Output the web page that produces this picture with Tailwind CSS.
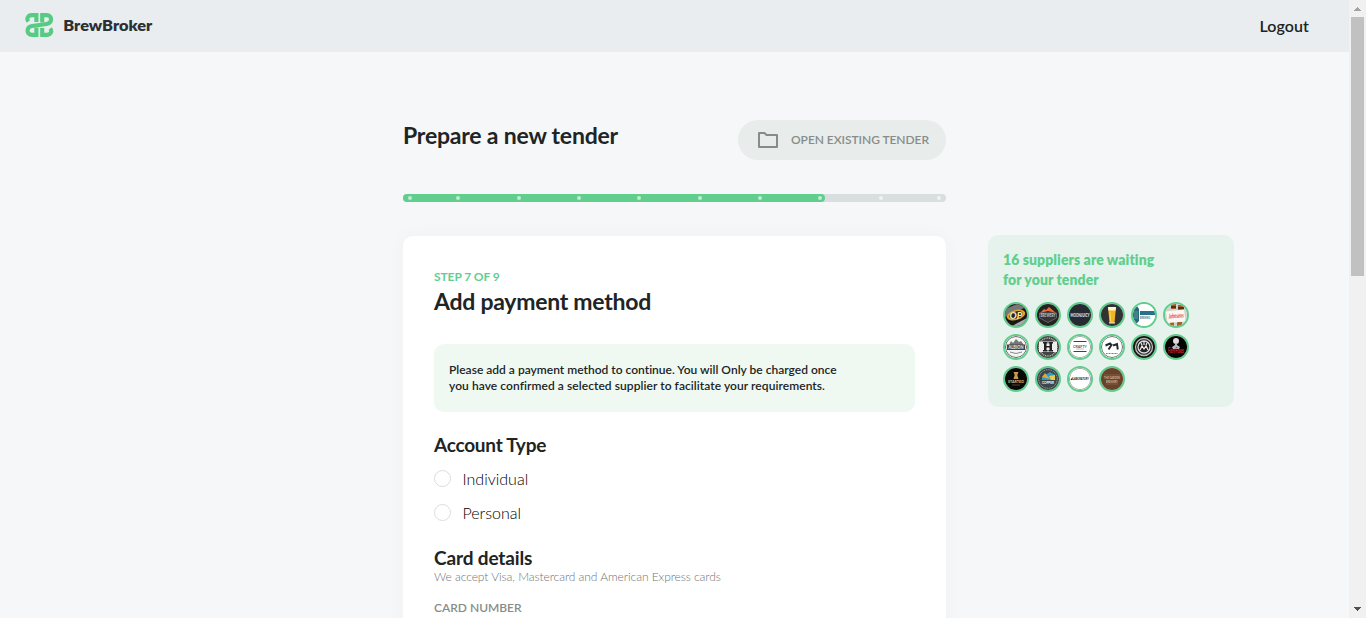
<!DOCTYPE html>
<html lang="en">
<head>
<meta charset="utf-8">
<title>BrewBroker</title>
<script src="https://cdn.jsdelivr.net/npm/@tailwindcss/browser@4"></script>
</head>
<body class="flex h-[618px] w-[1366px] overflow-hidden bg-[#f6f7f9] font-['Lato',sans-serif] text-[#202424]">
<div class="h-[618px] w-[1349px] shrink-0 overflow-hidden">
  <header class="flex h-[52px] items-start justify-between bg-[#e9edf0] pl-[25px] pr-10">
    <div class="flex items-start pt-[13px]">
      <svg class="h-6 w-[29px]" viewBox="0 0 29 24" fill="none" stroke="#56cb82" stroke-width="4.100">
        <path d="M11.400 9V2.100H7C2.700 2.100 1.200 5.800 3.400 8.600"/>
        <path d="M11.400 14.800V21.900H7C1 21.900 1 13.700 7 13L21.600 11C27.600 10.300 27.600 2.100 21.600 2.100H17.200V9.200"/>
        <path d="M17.200 15V21.900H21.600C25.900 21.900 27.400 18.200 25.200 15.400"/>
      </svg>
      <svg class="h-6 w-[100px]" viewBox="0 0 100 24"><text x="9.300" y="17.700" textLength="89" lengthAdjust="spacingAndGlyphs" font-family="Lato" font-weight="800" font-size="15.500" fill="#2b3033">BrewBroker</text></svg>
    </div>
    <div class="pt-[14px] text-[16px] leading-6 font-semibold tracking-[0.08px]">Logout</div>
  </header>
  <div class="flex items-start pl-[403px]">
    <main class="w-[543px] pt-[68px]">
      <div class="flex h-10 items-start justify-between">
        <h1 class="text-[23px] leading-[30px] font-bold tracking-[-0.2px]">Prepare a new tender</h1>
        <div class="flex h-10 w-[208px] items-center rounded-full bg-[#e8edeb] pl-5">
          <svg class="h-4 w-5" viewBox="0 0 20 16" fill="none" stroke="#868c8a" stroke-width="2" stroke-linejoin="round"><path d="M1 1h5.500l2 2H19v12H1z"/></svg>
          <span class="ml-[13px] text-[12px] font-semibold tracking-[-0.05px] whitespace-nowrap text-[#868c8a]">OPEN EXISTING TENDER</span>
        </div>
      </div>
      <svg class="mt-[34px] block h-2 w-[543px]" viewBox="0 0 543 8">
        <rect width="543" height="8" rx="4" fill="#d9dee0"/><rect width="422" height="8" rx="4" fill="#62ce8e"/>
        <g fill="#fff" fill-opacity=".6"><circle cx="7" cy="4" r="2"/><circle cx="55" cy="4" r="2"/><circle cx="116" cy="4" r="2"/><circle cx="176" cy="4" r="2"/><circle cx="236" cy="4" r="2"/><circle cx="297" cy="4" r="2"/><circle cx="357" cy="4" r="2"/><circle cx="417" cy="4" r="2"/><circle cx="478" cy="4" r="2"/><circle cx="536" cy="4" r="2"/></g>
      </svg>
      <section class="mt-[34px] h-[420px] rounded-t-[10px] bg-white px-[31px] pt-8 shadow-[0_0_20px_rgba(0,0,0,0.03)]">
        <div class="text-[12px] leading-[18px] font-bold tracking-[-0.1px] text-[#62ce8e]">STEP 7 OF 9</div>
        <h2 class="-mt-px text-[23px] leading-8 font-bold tracking-[-0.26px]">Add payment method</h2>
        <div class="mt-[27px] h-[68px] rounded-[10px] bg-[#eff9f2] pt-[18px] pl-[15px] text-[12px] leading-4 font-semibold">
          <p class="tracking-[0.01px] whitespace-nowrap">Please add a payment method to continue. You will Only be charged once</p>
          <p class="tracking-[0.065px] whitespace-nowrap">you have confirmed a selected supplier to facilitate your requirements.</p>
        </div>
        <h3 class="mt-[21px] text-[19px] leading-6 font-bold tracking-[-0.24px]">Account Type</h3>
        <div class="mt-3 flex h-[18px] items-start"><span class="mt-px size-[17px] rounded-full border border-[#d9dee0]"></span><span class="ml-[11.500px] text-[16px] leading-[20px] font-light text-black">Individual</span></div>
        <div class="mt-4 flex h-[18px] items-start"><span class="mt-px size-[17px] rounded-full border border-[#d9dee0]"></span><span class="ml-[11.500px] text-[16px] leading-[20px] font-light text-black">Personal</span></div>
        <h3 class="mt-[25px] text-[19px] leading-6 font-bold tracking-[-0.13px]">Card details</h3>
        <p class="text-[12px] leading-[14px] font-light tracking-[-0.06px] text-[#6f7477]">We accept Visa, Mastercard and American Express cards</p>
        <p class="mt-4 text-[12px] leading-4 font-semibold text-[#868c8a]">CARD NUMBER</p>
      </section>
    </main>
    <aside class="mt-[183px] ml-[42px] h-[172px] w-[246px] rounded-[10px] bg-[#e6f3ec] pt-[15px] pl-[15px]">
      <p class="text-[14px] leading-5 font-extrabold tracking-[0.08px] text-[#62ce8e]">16 suppliers are waiting<br>for your tender</p>
      <div class="mt-3 grid w-[186px] grid-cols-6 gap-1.5 *:size-[26px] *:overflow-hidden *:rounded-full *:border-2 *:border-[#5fce8c]">
        <svg viewBox="0 0 22 22"><rect width="22" height="22" fill="#171717"/><path d="M0 5L12 0l9 3-8 4L0 13z" fill="#777"/><path d="M7 22l15-8v8z" fill="#aaa"/><ellipse cx="11" cy="11" rx="9.500" ry="5" fill="#dba52e" transform="rotate(-16 11 11)"/><ellipse cx="11" cy="11" rx="7" ry="3.500" fill="#222" transform="rotate(-16 11 11)"/><text x="4.500" y="14.500" font-family="Lato" font-weight="900" font-style="italic" font-size="9.500" fill="#f7e6b0">OP</text></svg>
        <svg viewBox="0 0 22 22"><rect width="22" height="22" fill="#252322"/><path d="M3 9l4-4 2 1 3-3 7 6-4-1-4-1-4 1z" fill="#e66d3a"/><path d="M2.500 9h17v5L11 18.500 2.500 14z" fill="#343434" stroke="#888" stroke-width=".6"/><text x="3.500" y="13.300" textLength="15" lengthAdjust="spacingAndGlyphs" font-family="Lato" font-weight="700" font-size="5" fill="#ccc">BREWERY</text></svg>
        <svg viewBox="0 0 22 22"><rect width="22" height="22" fill="#262a31"/><text x="1.500" y="13" textLength="19" lengthAdjust="spacingAndGlyphs" font-family="Lato" font-weight="900" font-size="6" fill="#eee">MOONJUICY</text></svg>
        <svg viewBox="0 0 22 22"><rect width="22" height="22" fill="#303236"/><path d="M7 3h8l-1.500 16h-5z" fill="#f0b51f"/><path d="M7 3h8l-.4 3.500H7.400z" fill="#fff5d5"/><path d="M9 8l.8 10" stroke="#ffd95a"/><path d="M8 19h6" stroke="#eee"/></svg>
        <svg viewBox="0 0 22 22"><rect width="22" height="22" fill="#fff"/><path d="M0 3l4-1 2 3v12l-3 3H0z" fill="#286879"/><path d="M2 7v8M4 7v8" stroke="#8db8c1" stroke-width=".6"/><rect x="7" y="7" width="15" height="4" fill="#277287"/><text x="7" y="14.500" textLength="10" lengthAdjust="spacingAndGlyphs" font-family="Lato" font-weight="700" font-size="3.500" fill="#277287">BREWING</text></svg>
        <svg viewBox="0 0 22 22"><rect width="22" height="22" fill="#d4d0cb"/><path d="M6 0h5v5H6zM13 1h6v5h-6zM5 18h4v4H5zM12 18h5v4h-5z" fill="#a95d27"/><path d="M6 3h5M13 4h6" stroke="#382015" stroke-width="1.500"/><path d="M1 7.500l18-2 1.500 12-18 1.500z" fill="#faf6f4"/><text x="3.500" y="14" textLength="15" lengthAdjust="spacingAndGlyphs" transform="rotate(-4 11 11)" font-family="Lato" font-weight="900" font-style="italic" font-size="6.500" fill="#e25255">Johnsons</text></svg>
        <svg viewBox="0 0 22 22"><rect width="22" height="22" fill="#f5f5f5"/><circle cx="11" cy="11" r="10.500" fill="none" stroke="#666"/><path d="M4 9l2-4 2 2 3-4 3 3 2-1 3 4z" fill="#777"/><rect x="2" y="8.500" width="18" height="5.500" fill="#444"/><text x="3.500" y="13.200" textLength="15" lengthAdjust="spacingAndGlyphs" font-family="Lato" font-weight="800" font-size="5.500" fill="#ddd">ALBION</text><path d="M5 16q6 3 12 0" stroke="#888" fill="none"/></svg>
        <svg viewBox="0 0 22 22"><rect width="22" height="22" fill="#444"/><circle cx="11" cy="11" r="9" fill="none" stroke="#bbb" stroke-width="1.500" stroke-dasharray="1 .8"/><rect x="2" y="5.500" width="18" height="10.500" fill="#eee"/><path d="M6 6h4.500v1.500h-1V10h3V7.500h-1V6H16v1.500h-1v6.500h1v1.500h-4.500V14h1v-2.500h-3V14h1v1.500H6V14h1V7.500H6z" fill="#222"/></svg>
        <svg viewBox="0 0 22 22"><rect width="22" height="22" fill="#fff"/><circle cx="11" cy="11" r="10.700" fill="none" stroke="#777" stroke-width=".7"/><path d="M4.500 5.500h13M4.500 15.500h13" stroke="#444"/><text x="4" y="11.700" textLength="14" lengthAdjust="spacingAndGlyphs" font-family="Lato" font-weight="700" font-size="4.500" fill="#555">CRAFTY</text><path d="M7 13h8" stroke="#aaa" stroke-width=".7"/></svg>
        <svg viewBox="0 0 22 22"><rect width="22" height="22" fill="#fff"/><circle cx="11" cy="11" r="10.500" fill="none" stroke="#6c7073"/><path d="M4.500 9.500L9 7.500l1.500 1.500-3 4.500M12 9.500l4-1.500.8 5.500" fill="none" stroke="#252a30" stroke-width="2"/><path d="M5 17.500h12" stroke="#777" stroke-width="1.200" stroke-dasharray="1 .5"/></svg>
        <svg viewBox="0 0 22 22"><rect width="22" height="22" fill="#151515"/><circle cx="11" cy="11" r="8.500" fill="#222" stroke="#bbb" stroke-width="1.300"/><circle cx="11" cy="11" r="6" fill="none" stroke="#ddd" stroke-width="1.300"/><path d="M7 14l2-4 2 3 2-3 2 4M11 5v4M8 7l1 2M14 7l-1 2" stroke="#eee" stroke-width="1.200" fill="none"/></svg>
        <svg viewBox="0 0 22 22"><rect width="22" height="22" fill="#050505"/><circle cx="11" cy="5" r="3" fill="#ddd"/><path d="M10 7h2v2l3 2-1 2H8l-1-2 3-2z" fill="#bbb"/><text x="3" y="17" textLength="16" lengthAdjust="spacingAndGlyphs" font-family="Lato" font-weight="700" font-style="italic" font-size="6.500" fill="#e02031">FieryFoxes</text></svg>
        <svg viewBox="0 0 22 22"><rect width="22" height="22" fill="#080909"/><path d="M8.500 4h5l-1.200 3 1.200 4h-5l1.200-4z" fill="#c59b52"/><text x="3" y="15.300" textLength="16" lengthAdjust="spacingAndGlyphs" font-family="Lato" font-weight="700" font-size="4.500" fill="#ddc58c">STARTED</text><path d="M7 17h8" stroke="#776238" stroke-width=".7"/></svg>
        <svg viewBox="0 0 22 22"><rect width="22" height="22" fill="#3c464b"/><circle cx="11" cy="11" r="9.300" fill="none" stroke="#aaa" stroke-width="1" stroke-dasharray="1 .8"/><path d="M5 9l8-5 5 3v5H5z" fill="#2d9bc4"/><path d="M8 5l5 6-8-2z" fill="#e4a437"/><path d="M12 8l6-1v5h-4z" fill="#e6cc4d"/><text x="5" y="15.500" textLength="12" lengthAdjust="spacingAndGlyphs" font-family="Lato" font-weight="700" font-size="3.500" fill="#fff">COPPER</text></svg>
        <svg viewBox="0 0 22 22"><rect width="22" height="22" fill="#fff"/><circle cx="11" cy="11" r="10.700" fill="none" stroke="#777" stroke-width=".7"/><path d="M1.500 12l2-3v3z" fill="#222"/><text x="3.800" y="12.200" textLength="16" lengthAdjust="spacingAndGlyphs" font-family="Lato" font-weight="900" font-size="4.500" fill="#222">LABORATORY</text></svg>
        <svg viewBox="0 0 22 22"><rect width="22" height="22" fill="#694329"/><path d="M3 7h16M5 16h12" stroke="#8e6f58" stroke-width=".6"/><text x="3" y="11" textLength="16" lengthAdjust="spacingAndGlyphs" font-family="Lato" font-weight="700" font-size="4" fill="#d1b9a3">THE GARDEN</text><text x="5" y="15" textLength="12" lengthAdjust="spacingAndGlyphs" font-family="Lato" font-weight="700" font-size="4" fill="#d1b9a3">BREWERY</text></svg>
      </div>
    </aside>
  </div>
</div>
<div class="flex h-[618px] w-[17px] shrink-0 flex-col items-center bg-[#f1f1f1]">
  <svg class="h-[17px] w-[17px] shrink-0" viewBox="0 0 17 17" shape-rendering="crispEdges"><path d="M8 7h1v1h1v1h1v1h1v1H5v-1h1V9h1V8h1z" fill="#a3a3a3"/></svg>
  <div class="h-[259px] w-[13px] bg-[#c1c1c1]"></div>
  <svg class="mt-auto h-[17px] w-[17px] shrink-0" viewBox="0 0 17 17" shape-rendering="crispEdges"><path d="M5 6h7v1h-1v1h-1v1H9v1H8V9H7V8H6V7H5z" fill="#505050"/></svg>
</div>
</body>
</html>
